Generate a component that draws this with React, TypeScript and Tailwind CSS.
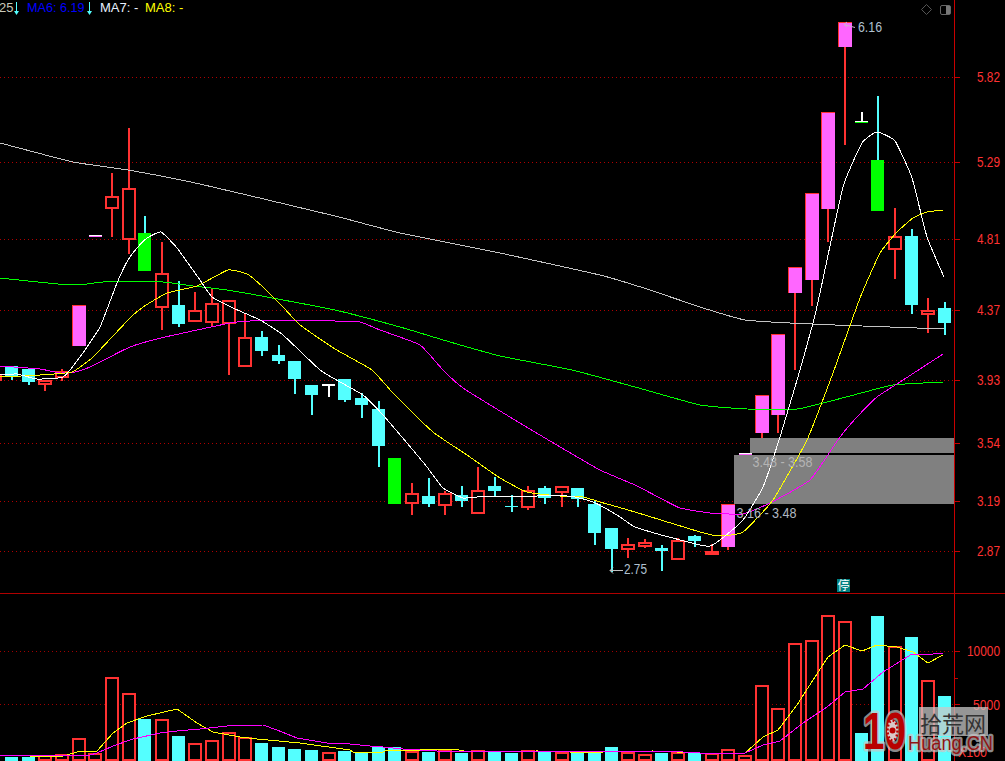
type Candle = {
  kind: "red" | "cyan" | "green" | "pink" | "flat" | "tee" | "inverted";
  top: number;
  bottom: number;
  high?: number;
  low?: number;
};

const RED = "#ff3232";
const CYAN = "#54ffff";
const PINK = "#ff66ff";
const GREEN = "#00ff00";

const slotX = (i: number) => 11.5 + 16.66 * i;

// index 0 is the first full candle on screen, -1 is cut off by the left edge
const candles: (Candle & { i: number })[] = [
  { i: -1, kind: "red", top: 374, bottom: 380, high: 370, low: 386 },
  { i: 0, kind: "cyan", top: 366, bottom: 377, low: 380 },
  { i: 1, kind: "cyan", top: 369, bottom: 382, low: 385 },
  { i: 2, kind: "red", top: 380, bottom: 384, low: 391 },
  { i: 3, kind: "red", top: 371, bottom: 377, high: 369, low: 381 },
  { i: 4, kind: "pink", top: 305, bottom: 346 },
  { i: 5, kind: "flat", top: 235, bottom: 237 },
  { i: 6, kind: "red", top: 196, bottom: 208, high: 173, low: 237 },
  { i: 7, kind: "red", top: 188, bottom: 239, high: 128, low: 254 },
  { i: 8, kind: "green", top: 233, bottom: 271, high: 216 },
  { i: 9, kind: "red", top: 273, bottom: 307, high: 242, low: 330 },
  { i: 10, kind: "cyan", top: 305, bottom: 324, high: 281, low: 327 },
  { i: 11, kind: "red", top: 310, bottom: 321, high: 292 },
  { i: 12, kind: "red", top: 303, bottom: 322, high: 289, low: 326 },
  { i: 13, kind: "red", top: 300, bottom: 323, low: 375 },
  { i: 14, kind: "red", top: 337, bottom: 366, high: 313 },
  { i: 15, kind: "cyan", top: 337, bottom: 351, high: 331, low: 356 },
  { i: 16, kind: "cyan", top: 355, bottom: 361, high: 345, low: 364 },
  { i: 17, kind: "cyan", top: 361, bottom: 379, low: 394 },
  { i: 18, kind: "cyan", top: 385, bottom: 395, low: 415 },
  { i: 19, kind: "tee", top: 384, bottom: 397 },
  { i: 20, kind: "cyan", top: 379, bottom: 400, low: 402 },
  { i: 21, kind: "cyan", top: 398, bottom: 405, high: 393, low: 418 },
  { i: 22, kind: "cyan", top: 409, bottom: 446, high: 401, low: 467 },
  { i: 23, kind: "green", top: 458, bottom: 504 },
  { i: 24, kind: "red", top: 493, bottom: 503, high: 483, low: 515 },
  { i: 25, kind: "cyan", top: 496, bottom: 504, high: 478, low: 507 },
  { i: 26, kind: "red", top: 493, bottom: 505, high: 491, low: 515 },
  { i: 27, kind: "cyan", top: 495, bottom: 501, high: 486, low: 507 },
  { i: 28, kind: "red", top: 490, bottom: 513, high: 467 },
  { i: 29, kind: "cyan", top: 486, bottom: 491, high: 477, low: 496 },
  { i: 30, kind: "cyan", top: 506, bottom: 507, high: 495, low: 512 },
  { i: 31, kind: "red", top: 490, bottom: 507, high: 486, low: 510 },
  { i: 32, kind: "cyan", top: 488, bottom: 498, high: 486, low: 504 },
  { i: 33, kind: "red", top: 486, bottom: 492, low: 507 },
  { i: 34, kind: "cyan", top: 488, bottom: 499, low: 507 },
  { i: 35, kind: "cyan", top: 504, bottom: 533, high: 500, low: 545 },
  { i: 36, kind: "cyan", top: 528, bottom: 549, low: 572 },
  { i: 37, kind: "red", top: 544, bottom: 549, high: 538, low: 558 },
  { i: 38, kind: "red", top: 542, bottom: 546, high: 539, low: 548 },
  { i: 39, kind: "cyan", top: 548, bottom: 551, high: 545, low: 571 },
  { i: 40, kind: "red", top: 540, bottom: 559, high: 538 },
  { i: 41, kind: "cyan", top: 536, bottom: 541, high: 535, low: 547 },
  { i: 42, kind: "red", top: 551, bottom: 554, high: 544 },
  { i: 43, kind: "pink", top: 504, bottom: 547, low: 550 },
  { i: 44, kind: "flat", top: 453, bottom: 455 },
  { i: 45, kind: "pink", top: 395, bottom: 433, low: 438 },
  { i: 46, kind: "pink", top: 334, bottom: 415, low: 433 },
  { i: 47, kind: "pink", top: 267, bottom: 293, low: 370 },
  { i: 48, kind: "pink", top: 193, bottom: 280, low: 306 },
  { i: 49, kind: "pink", top: 112, bottom: 209, low: 242 },
  { i: 50, kind: "pink", top: 22, bottom: 47, low: 145 },
  { i: 51, kind: "inverted", top: 112, bottom: 123 },
  { i: 52, kind: "green", top: 160, bottom: 211, high: 96 },
  { i: 53, kind: "red", top: 236, bottom: 249, high: 208, low: 279 },
  { i: 54, kind: "cyan", top: 236, bottom: 305, high: 229, low: 314 },
  { i: 55, kind: "red", top: 310, bottom: 314, high: 298, low: 333 },
  { i: 56, kind: "cyan", top: 308, bottom: 323, high: 302, low: 335 },
];

// volume tops by slot, true = up day (hollow red)
const volumes: [number, boolean][] = [
  [757, false], [757, false], [755, true], [754, true], [738, true], [753, true], [677, true], [693, true],
  [719, false], [719, true], [736, false], [743, true], [740, true], [732, true], [737, true], [743, false],
  [747, false], [749, false], [750, false], [752, true], [751, false], [752, false], [747, false], [747, false],
  [751, true], [752, false], [749, true], [753, false], [750, true], [752, false], [753, false], [750, true],
  [752, false], [752, true], [753, false], [753, false], [747, false], [752, true], [754, true], [753, false],
  [752, true], [753, false], [753, true], [749, true], [755, true], [685, true], [708, true], [643, true],
  [640, true], [615, true], [621, true], [733, false], [616, false], [646, true], [637, false], [680, true],
  [696, false],
];

const lineGrey =
  "0,143 73,162 128,170 200,184 335,216 400,233 500,253 600,275 650,290 700,307 745,320 790,323 835,325 944,329";
const lineGreen =
  "0,278 58,284 87,284 103,282 163,282 193,286 227,290 267,297 335,310 400,327 450,342 500,356 572,370 635,387 700,405 747,409 797,409 823,403 850,396 893,385 943,382";
const lineMagenta =
  "0,366 40,369 60,373 75,372 90,367 130,347 165,337 230,323 250,321 335,321 360,322 380,330 420,345 443,370 463,388 500,411 550,441 600,470 635,485 660,498 680,508 710,513 743,514 770,503 810,480 840,437 857,417 877,397 900,382 943,354";
const lineYellow =
  "0,377 40,375 72,372 93,357 130,318 143,307 167,293 197,286 228,270 247,274 263,287 283,307 300,325 335,349 372,370 393,393 433,432 467,455 500,478 527,492 560,496 583,497 600,502 635,512 700,532 720,536 743,532 773,500 807,440 833,373 860,298 880,253 897,232 913,218 927,212 943,210";
const lineWhite =
  "0,375 17,374 37,379 63,377 80,357 100,327 117,283 128,260 137,248 147,238 161,232 177,248 200,280 212,297 233,308 260,320 283,335 320,370 340,382 363,395 383,415 407,443 427,467 443,488 463,498 477,497 567,496 593,502 617,515 635,527 665,536 700,545 710,546 720,540 743,520 763,487 780,437 800,370 813,323 820,293 843,187 862,143 877,132 895,141 912,178 927,237 944,277";
const volYellow =
  "0,755 60,757 77,752 97,751 113,733 127,723 147,716 177,709 197,723 213,732 240,737 257,739 300,743 350,750 353,752 383,752 387,750 420,750 437,749 453,749 470,752 537,751 570,752 603,752 653,751 700,753 745,753 763,737 778,730 797,705 813,680 828,657 845,645 862,651 877,645 897,647 913,652 928,663 943,655";
const volMagenta =
  "0,755 90,755 97,753 113,746 133,739 160,733 177,731 200,729 227,726 263,725 277,730 297,738 327,743 350,744 370,746 383,747 403,749 437,751 537,751 617,751 683,752 700,753 745,753 763,745 780,741 803,723 827,707 845,692 863,689 883,672 912,654 933,654 943,653";

const priceLevels: [number, string][] = [
  [77, "5.82"], [162, "5.29"], [239, "4.81"], [310, "4.37"], [380, "3.93"], [443, "3.54"], [501, "3.19"], [551, "2.87"],
];

// moving averages bend a little between samples, keep the peaks fairly sharp
function smoothPath(points: string) {
  const pts = points.split(" ").map((p) => p.split(",").map(Number));
  let d = `M${pts[0][0]} ${pts[0][1]}`;
  for (let i = 0; i < pts.length - 1; i++) {
    const p0 = pts[Math.max(i - 1, 0)];
    const p1 = pts[i];
    const p2 = pts[i + 1];
    const p3 = pts[Math.min(i + 2, pts.length - 1)];
    const c1x = p1[0] + (p2[0] - p0[0]) / 14;
    const c1y = p1[1] + (p2[1] - p0[1]) / 14;
    const c2x = p2[0] - (p3[0] - p1[0]) / 14;
    const c2y = p2[1] - (p3[1] - p1[1]) / 14;
    d += `C${c1x} ${c1y} ${c2x} ${c2y} ${p2[0]} ${p2[1]}`;
  }
  return d;
}

function CandleMark({ c }: { c: Candle & { i: number } }) {
  const cx = slotX(c.i);
  const left = Math.round(cx - 6.5);
  const wick = left + 6;
  const h = c.bottom - c.top;

  if (c.kind === "flat") {
    return (
      <g>
        <rect x={left + 1} y={c.top} width={13} height={1} fill="#ffffff" />
        <rect x={left + 1} y={c.top + 1} width={13} height={1} fill={PINK} />
      </g>
    );
  }
  if (c.kind === "tee") {
    return (
      <g fill="#ffffff">
        <rect x={left} y={c.top} width={13} height={2} />
        <rect x={wick} y={c.top} width={2} height={h} />
      </g>
    );
  }
  if (c.kind === "inverted") {
    return (
      <g>
        <rect x={wick} y={c.top} width={2} height={h - 1} fill="#ffffff" />
        <rect x={left} y={c.bottom - 2} width={13} height={1} fill="#ffffff" />
        <rect x={left} y={c.bottom - 1} width={13} height={1} fill={GREEN} />
      </g>
    );
  }

  const wickColor = c.kind === "cyan" || c.kind === "green" ? CYAN : RED;
  return (
    <g>
      {c.high !== undefined && <rect x={wick} y={c.high} width={2} height={c.top - c.high} fill={wickColor} />}
      {c.low !== undefined && <rect x={wick} y={c.bottom} width={2} height={c.low - c.bottom} fill={wickColor} />}
      {c.kind === "red" && <rect x={left + 1} y={c.top + 1} width={12} height={h - 1} fill="#000000" stroke={RED} strokeWidth={2} />}
      {c.kind === "cyan" && <rect x={left} y={c.top} width={13} height={h} fill={CYAN} />}
      {c.kind === "green" && <rect x={left} y={c.top} width={13} height={h} fill={GREEN} />}
      {c.kind === "pink" && (
        <g>
          <rect x={left} y={c.top} width={14} height={h} fill={PINK} />
          <rect x={left} y={c.top} width={14} height={1} fill={RED} />
          <rect x={left} y={c.top} width={1} height={h} fill={RED} />
        </g>
      )}
    </g>
  );
}

function VolumeBar({ i, top, up }: { i: number; top: number; up: boolean }) {
  const left = Math.round(slotX(i) - 6.5);
  if (up) {
    return <rect x={left + 1} y={top + 1} width={12} height={760 - top - 1} fill="#000000" stroke={RED} strokeWidth={2} />;
  }
  return <rect x={left} y={top} width={13} height={761 - top} fill={CYAN} />;
}

function DownArrow() {
  return (
    <svg width="9" height="16" viewBox="0 0 9 16" className="block shrink-0">
      <path d="M4.5 2V12" stroke={CYAN} strokeWidth="1" fill="none" />
      <path d="M2 11h5L4.5 15z" fill={CYAN} />
    </svg>
  );
}

function AxisLabel({ x, y, width, children }: { x: number; y: number; width: number; children: string }) {
  return (
    <text x={x} y={y} fontSize="14" fill={RED} textLength={width} lengthAdjust="spacingAndGlyphs">
      {children}
    </text>
  );
}

function Chart() {
  return (
    <svg width="1005" height="761" viewBox="0 0 1005 761" className="block">
      {priceLevels.map(([y]) => (
        <line key={y} x1="0" x2="954" y1={y + 0.5} y2={y + 0.5} stroke="#b00000" strokeDasharray="1 3" />
      ))}
      <line x1="0" x2="954" y1="651.5" y2="651.5" stroke="#a00000" strokeDasharray="1 3" />
      <line x1="0" x2="954" y1="704.5" y2="704.5" stroke="#a00000" strokeDasharray="1 3" />

      {/* gap zones */}
      <rect x="750" y="438" width="204" height="15" fill="#808080" />
      <rect x="734" y="455" width="220" height="49" fill="#808080" />

      {candles.map((c) => (
        <CandleMark key={c.i} c={c} />
      ))}
      {volumes.map(([top, up], i) => (
        <VolumeBar key={i} i={i} top={top} up={up} />
      ))}

      <g fill="none" shapeRendering="crispEdges">
        <path d={smoothPath(lineGrey)} stroke="#c4c4c4" />
        <path d={smoothPath(lineGreen)} stroke={GREEN} />
        <path d={smoothPath(lineMagenta)} stroke="#ff00ff" />
        <path d={smoothPath(lineYellow)} stroke="#ffff00" />
        <path d={smoothPath(lineWhite)} stroke="#ffffff" />
        <polyline points={volYellow} stroke="#ffff00" />
        <polyline points={volMagenta} stroke="#ff00ff" />
      </g>

      <text x="752.5" y="467" fontSize="14" fill="#b4b4b4" textLength="60" lengthAdjust="spacingAndGlyphs">3.48 - 3.58</text>
      <text x="736.5" y="518" fontSize="14" fill="#b0b8c0" textLength="60" lengthAdjust="spacingAndGlyphs">3.16 - 3.48</text>
      <text x="624" y="574" fontSize="14" fill="#b0c0d0" textLength="23" lengthAdjust="spacingAndGlyphs">2.75</text>
      <path d="M610 570.5H623M613 567.5l-3 3 3 3" stroke="#c0c0c0" fill="none" />
      <text x="858" y="32" fontSize="14" fill="#b0c0d0" textLength="24" lengthAdjust="spacingAndGlyphs">6.16</text>
      <path d="M844 24.5l11 3M847 22l-3 2.5 3 2.5" stroke="#d0b0d0" fill="none" />

      {/* suspended badge */}
      <rect x="837" y="579" width="13" height="13" fill="#008080" />
      <text x="843.5" y="590" fontSize="12" fill="#ffffff" textAnchor="middle" className="font-['Noto_Sans_CJK_SC',sans-serif]">停</text>

      {/* axes */}
      <line x1="954.5" x2="954.5" y1="0" y2="761" stroke="#c80000" />
      <line x1="0" x2="1005" y1="593.5" y2="593.5" stroke="#b00000" />
      {priceLevels.map(([y, label]) => (
        <g key={label}>
          <line x1="954" x2="960" y1={y + 0.5} y2={y + 0.5} stroke="#c80000" />
          <AxisLabel x={977} y={y + 5} width={23}>{label}</AxisLabel>
        </g>
      ))}
      <line x1="954" x2="960" y1="651.5" y2="651.5" stroke="#c80000" />
      <line x1="954" x2="958" y1="678.5" y2="678.5" stroke="#c80000" />
      <line x1="954" x2="960" y1="704.5" y2="704.5" stroke="#c80000" />
      <AxisLabel x={967} y={656} width={33}>10000</AxisLabel>
      <AxisLabel x={973} y={710} width={27}>5000</AxisLabel>
      <AxisLabel x={958} y={757} width={29}>X100</AxisLabel>

      {/* toolbar glyphs */}
      <path d="M926.5 4.5l5 5-5 5-5-5z" fill="none" stroke="#555555" />
      <rect x="940.5" y="5.5" width="10" height="9" rx="1.5" fill="none" stroke="#666666" />
      <rect x="946" y="6" width="4" height="8" fill="#777777" />

      {/* site watermark */}
      <g strokeLinejoin="round">
        <rect x="919" y="707" width="69" height="29" fill="#c8c8c8" opacity="0.75" />
        <text x="920" y="732" fontSize="22" fill="#333333" className="font-['Noto_Sans_CJK_SC',sans-serif]">拾荒网</text>
        <text x="863" y="749" fontSize="52" fontWeight="700" fill="#b80000" stroke="#c8c8c8" strokeOpacity="0.7" strokeWidth="5" paintOrder="stroke" textLength="43" lengthAdjust="spacingAndGlyphs">10</text>
        <ellipse cx="892.5" cy="730.5" rx="5.5" ry="11" fill="#d8c8c8" />
        <ellipse cx="892.5" cy="730.5" rx="5" ry="10" fill="none" stroke="#b80000" strokeWidth="2.5" strokeDasharray="2 2" />
        <circle cx="892.5" cy="730.5" r="3" fill="#b80000" />
        <text x="908" y="750" fontSize="20" fill="#901414" stroke="#c8c8c8" strokeOpacity="0.7" strokeWidth="4.5" paintOrder="stroke" textLength="85" lengthAdjust="spacingAndGlyphs">Huang.CN</text>
      </g>
    </svg>
  );
}

export default function App() {
  return (
    <div className="relative h-[761px] w-[1005px] overflow-hidden bg-black font-['Liberation_Sans',Arial,sans-serif] text-[13px] leading-4">
      <Chart />
      <div className="absolute top-0 left-[-1px] flex items-start whitespace-nowrap">
        <span className="w-[13px] text-[#c8c8b8]">25</span>
        <DownArrow />
        <span className="ml-[6px] w-[58px] text-[12.6px] text-[#0000ff]">MA6: 6.19</span>
        <DownArrow />
        <span className="ml-[6px] w-[38px] text-[#e8f0ff]">MA7: -</span>
        <span className="ml-[7px] text-[#ffff00]">MA8: -</span>
      </div>
    </div>
  );
}
